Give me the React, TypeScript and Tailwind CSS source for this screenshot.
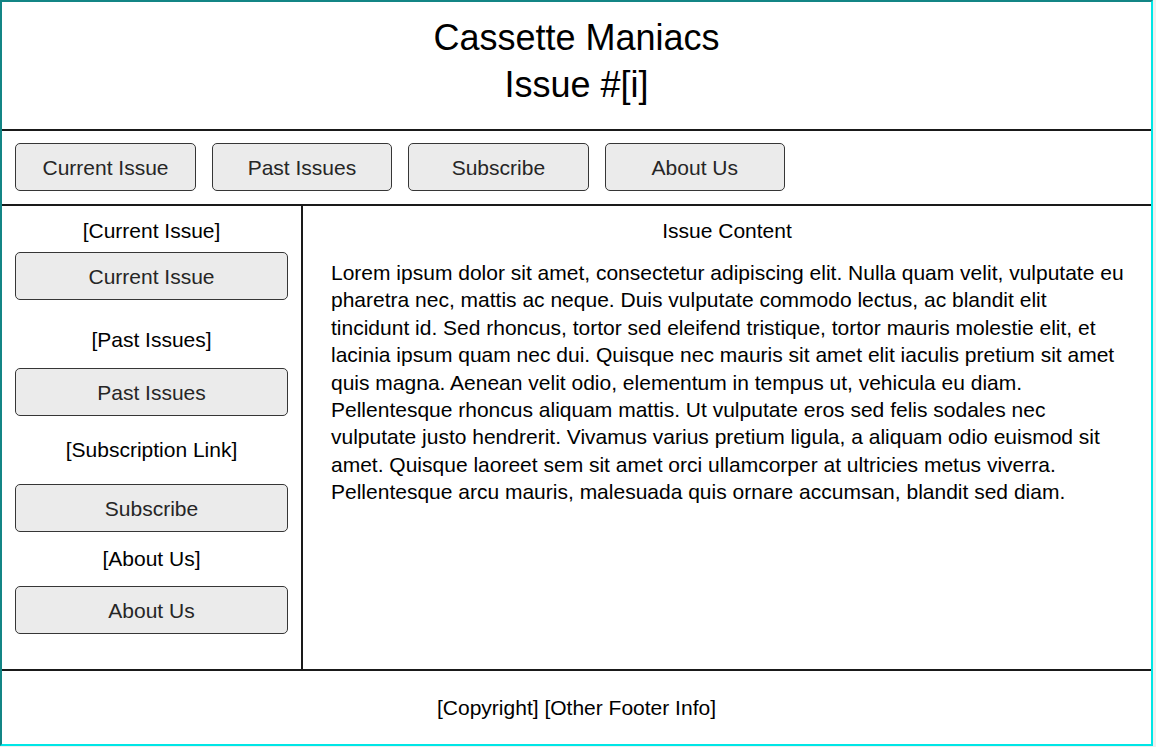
import React from "react";

const font = { fontFamily: '"Liberation Sans", Arial, sans-serif' };

function Btn({ label, className = "" }: { label: string; className?: string }) {
  return (
    <div
      className={`h-[48px] flex items-center justify-center rounded-[5px] border border-[#363636] bg-[#ebebeb] text-[21px] leading-[24px] text-[#262626] pt-[1px] ${className}`}
    >
      {label}
    </div>
  );
}

export default function App() {
  return (
    <div className="w-[1156px] h-[747px] bg-[#efefef] overflow-hidden" style={font}>
      <div className="w-[1153px] h-[746px] flex flex-col bg-white border-l-2 border-t-2 border-[#138585] border-r-2 border-r-[#00e6e6] border-b-2 border-b-[#00e6e6] text-black">
        {/* header */}
        <div className="h-[129px] shrink-0 border-b-2 border-[#1a1a1a] flex flex-col items-center pt-[12px] text-[36px] leading-[47px]">
          <div>Cassette Maniacs</div>
          <div>Issue #[i]</div>
        </div>
        {/* nav */}
        <div className="h-[75px] shrink-0 border-b-2 border-[#1a1a1a] flex gap-[15.7px] pl-[13px] pt-[12px]">
          <Btn label="Current Issue" className="w-[181px]" />
          <Btn label="Past Issues" className="w-[180.5px]" />
          <Btn label="Subscribe" className="w-[181px]" />
          <Btn label="About Us" className="w-[180.5px]" />
        </div>
        {/* body */}
        <div className="h-[465px] shrink-0 border-b-2 border-[#1a1a1a] flex">
          <div className="w-[301px] shrink-0 border-r-2 border-[#1a1a1a] pl-[13px] pr-[13px] flex flex-col text-[21px] leading-[24px]">
            <div className="text-center mt-[13px]">[Current Issue]</div>
            <Btn label="Current Issue" className="mt-[9px]" />
            <div className="text-center mt-[28px]">[Past Issues]</div>
            <Btn label="Past Issues" className="mt-[16px]" />
            <div className="text-center mt-[22px]">[Subscription Link]</div>
            <Btn label="Subscribe" className="mt-[22px]" />
            <div className="text-center mt-[15px]">[About Us]</div>
            <Btn label="About Us" className="mt-[15px]" />
          </div>
          <div className="flex-1 flex flex-col pl-[28px]">
            <div className="text-center text-[21px] leading-[24px] mt-[13px] -ml-[28px]">Issue Content</div>
            <p className="mt-[16px] w-[795px] text-[21px] leading-[27.4px]">
              Lorem ipsum dolor sit amet, consectetur adipiscing elit. Nulla quam velit, vulputate eu pharetra nec, mattis ac neque. Duis vulputate commodo lectus, ac blandit elit tincidunt id. Sed rhoncus, tortor sed eleifend tristique, tortor mauris molestie elit, et lacinia ipsum quam nec dui. Quisque nec mauris sit amet elit iaculis pretium sit amet quis magna. Aenean velit odio, elementum in tempus ut, vehicula eu diam. Pellentesque rhoncus aliquam mattis. Ut vulputate eros sed felis sodales nec vulputate justo hendrerit. Vivamus varius pretium ligula, a aliquam odio euismod sit amet. Quisque laoreet sem sit amet orci ullamcorper at ultricies metus viverra. Pellentesque arcu mauris, malesuada quis ornare accumsan, blandit sed diam.
            </p>
          </div>
        </div>
        {/* footer */}
        <div className="flex-1 flex items-center justify-center text-[21px] leading-[24px]">
          [Copyright] [Other Footer Info]
        </div>
      </div>
    </div>
  );
}
